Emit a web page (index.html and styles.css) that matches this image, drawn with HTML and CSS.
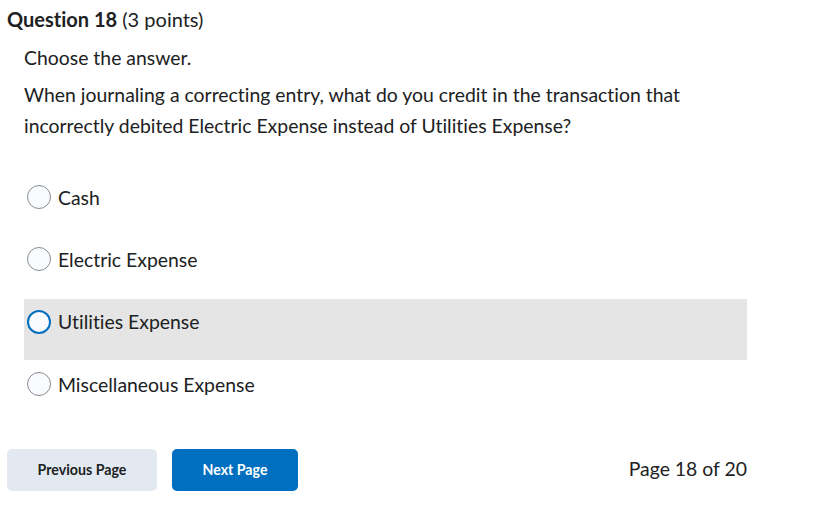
FILE: index.html
```html
<!DOCTYPE html>
<html>
<head>
<meta charset="utf-8">
<link rel="stylesheet" href="styles.css">
</head>
<body>
<div class="page">
  <h2 class="q-title"><strong>Question 18</strong> <span class="pts">(3 points)</span></h2>
  <div class="q-body">
    <p class="instr">Choose the answer.</p>
    <p class="q-text">When journaling a correcting entry, what do you credit in the transaction that incorrectly debited Electric Expense instead of Utilities Expense?</p>
    <div class="options">
      <label class="opt"><span class="radio"></span><span class="opt-text">Cash</span></label>
      <label class="opt"><span class="radio"></span><span class="opt-text">Electric Expense</span></label>
      <label class="opt hover"><span class="radio focus"></span><span class="opt-text">Utilities Expense</span></label>
      <label class="opt"><span class="radio"></span><span class="opt-text">Miscellaneous Expense</span></label>
    </div>
  </div>
  <div class="nav">
    <button class="btn btn-prev">Previous Page</button>
    <button class="btn btn-next">Next Page</button>
    <span class="page-count">Page 18 of 20</span>
  </div>
</div>
</body>
</html>
```
FILE: styles.css
```css
html, body {
  margin: 0;
  padding: 0;
  background: #ffffff;
}
body {
  font-family: Lato, "Noto Sans", sans-serif;
  color: #202122;
  font-variant-ligatures: none;
}
.page {
  width: 747px;
  padding: 7px 0 0 7px;
  box-sizing: border-box;
}
.q-title {
  margin: 0;
  font-size: 20px;
  line-height: 24px;
  font-weight: 400;
}
.q-title strong {
  font-weight: 700;
}
.q-body {
  padding-left: 17px;
}
.instr {
  margin: 13px 0 0;
  font-size: 19.4px;
  line-height: 28px;
}
.q-text {
  margin: 7px 0 0;
  font-size: 19.4px;
  line-height: 31px;
  max-width: 680px;
}
.options {
  display: flex;
  flex-direction: column;
  margin-top: 25px;
}
.opt {
  display: flex;
  align-items: center;
  gap: 7px;
  height: 62px;
  padding-left: 3px;
  font-size: 19.4px;
  font-variant-ligatures: none;
}
.opt.hover {
  background: #e5e5e5;
  align-items: flex-start;
  padding-top: 11px;
  height: 50px;
  margin-top: 9px;
}
.opt.hover + .opt {
  height: 48px;
}
.radio {
  width: 22px;
  height: 22px;
  border: 1px solid #868c8f;
  border-radius: 50%;
  background: #f9fbff;
  flex: none;
}
.radio.focus {
  width: 20px;
  height: 20px;
  border: 2px solid #006fbf;
}
.nav {
  display: flex;
  align-items: center;
  margin-top: 41px;
}
.btn {
  font-family: Lato, "Noto Sans", sans-serif;
  font-variant-ligatures: none;
  font-weight: 700;
  font-size: 14.2px;
  height: 42px;
  padding: 0 0 2px;
  border: none;
  border-radius: 5px;
  cursor: pointer;
}
.btn-prev {
  width: 150px;
  background: #e3e9f1;
  color: #202122;
}
.btn-next {
  width: 126px;
  margin-left: 15px;
  background: #006fbf;
  color: #ffffff;
}
.page-count {
  margin-left: auto;
  font-size: 19.4px;
  padding-bottom: 4px;
}
```
